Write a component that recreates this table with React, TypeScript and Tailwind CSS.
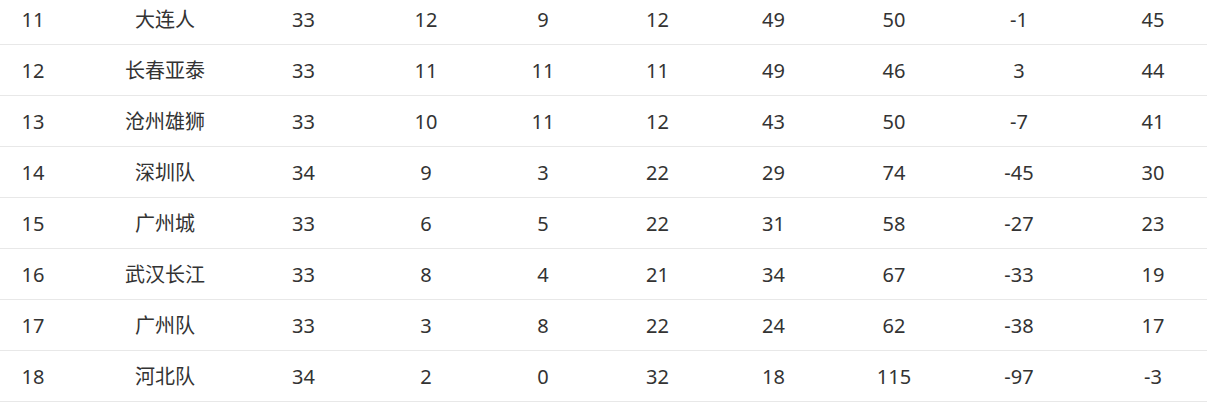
const rows: (string | number)[][] = [
  [11, "大连人", 33, 12, 9, 12, 49, 50, -1, 45],
  [12, "长春亚泰", 33, 11, 11, 11, 49, 46, 3, 44],
  [13, "沧州雄狮", 33, 10, 11, 12, 43, 50, -7, 41],
  [14, "深圳队", 34, 9, 3, 22, 29, 74, -45, 30],
  [15, "广州城", 33, 6, 5, 22, 31, 58, -27, 23],
  [16, "武汉长江", 33, 8, 4, 21, 34, 67, -33, 19],
  [17, "广州队", 33, 3, 8, 22, 24, 62, -38, 17],
  [18, "河北队", 34, 2, 0, 32, 18, 115, -97, -3],
];

export default function App() {
  return (
    <div
      className="w-[1207px] h-[408px] overflow-hidden bg-white text-[20px] text-[#333333]"
      style={{ fontFamily: '"Noto Sans", "Noto Sans CJK SC", sans-serif' }}
    >
      <div className="-mt-[6px]">
        {rows.map((row) => (
          <div
            key={row[0]}
            className="grid h-[51px] grid-cols-[66px_198px_79px_166px_68px_161px_71px_170px_80px_1fr] items-center border-b border-[#e8e8e8] pt-[2px]"
          >
            {row.map((cell, i) => (
              <div
                key={i}
                className={i === 9 ? "pl-[40px] text-center" : "text-center"}
              >
                {cell}
              </div>
            ))}
          </div>
        ))}
      </div>
    </div>
  );
}
